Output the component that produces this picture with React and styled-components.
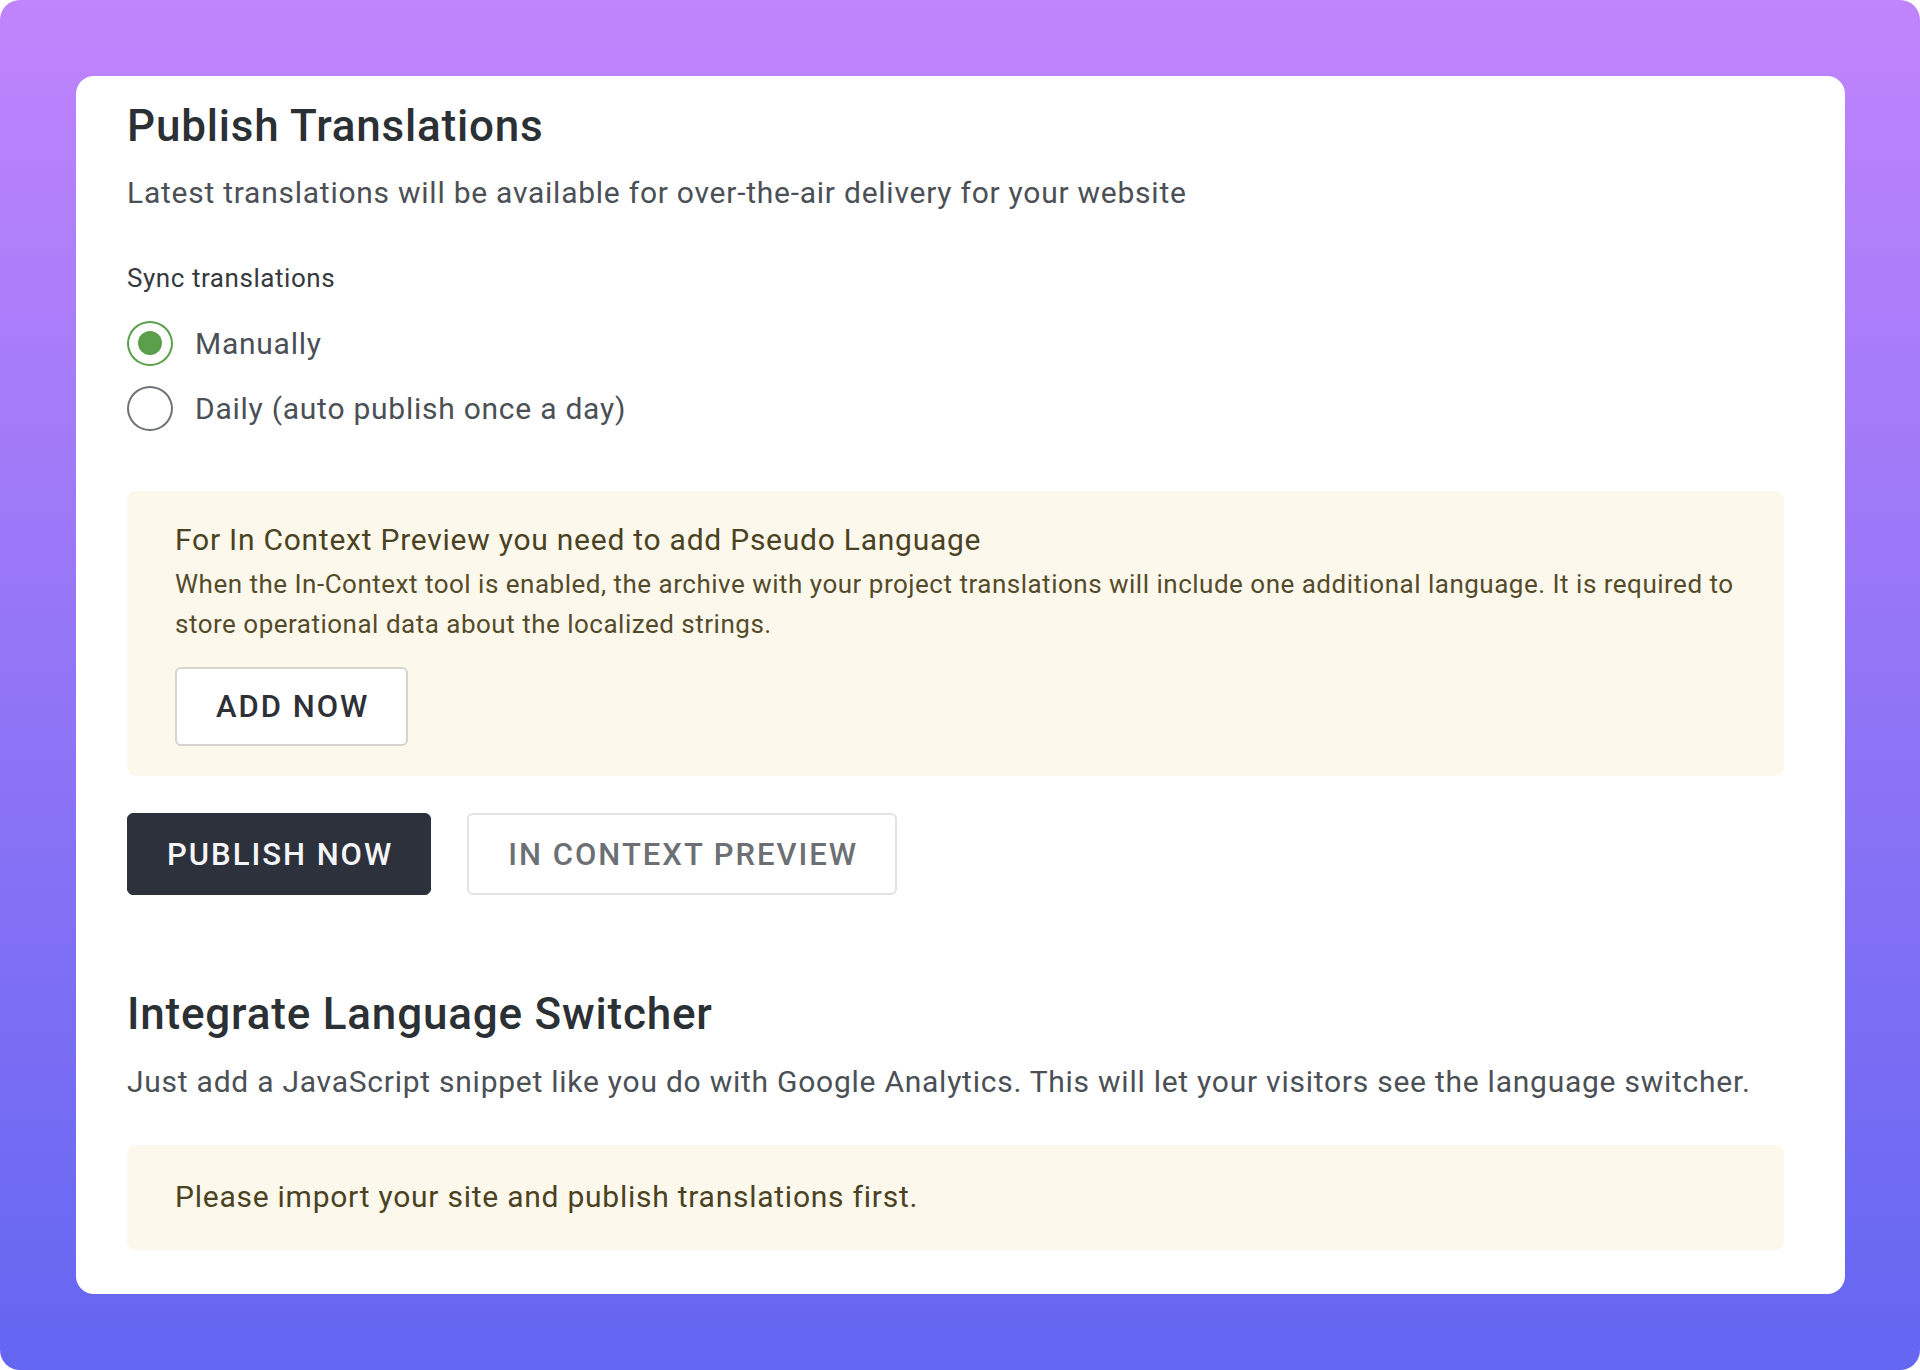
import React, { useState } from "react";
import styled, { createGlobalStyle } from "styled-components";

const Global = createGlobalStyle`
  html, body { margin: 0; padding: 0; background: #ffffff; }
  body { font-family: Roboto, "Noto Sans", "Liberation Sans", sans-serif; }
  * { box-sizing: border-box; }
`;

const Backdrop = styled.div`
  width: 1920px;
  height: 1370px;
  border-radius: 20px;
  background: linear-gradient(180deg, #c084fc 0%, #6366f1 100%);
  padding: 76px 75px 76px 76px;
`;

const Card = styled.div`
  background: #ffffff;
  border-radius: 18px;
  padding: 28px 61px 44px 51px;
  display: flex;
  flex-direction: column;
`;

const Title = styled.h1`
  margin: ${(p) => p.$top || 0}px 0 0;
  font-size: 44px;
  line-height: 44px;
  font-weight: 500;
  letter-spacing: 0.8px;
  color: #2b3035;
`;

const Lead = styled.p`
  margin: ${(p) => p.$top || 0}px 0 0;
  font-size: 30px;
  line-height: 36px;
  letter-spacing: 0.75px;
  color: #4b5056;
`;

const FieldLabel = styled.div`
  margin-top: 53px;
  font-size: 26px;
  line-height: 28px;
  letter-spacing: 0.55px;
  color: #35393e;
`;

const RadioGroup = styled.div`
  margin-top: 25px;
  display: flex;
  flex-direction: column;
  gap: 13px;
`;

const RadioRow = styled.label`
  display: flex;
  align-items: center;
  height: 52px;
  gap: 22px;
  cursor: pointer;
  font-size: 30px;
  letter-spacing: 0.75px;
  color: #4b5056;
`;

const RadioDot = styled.span`
  width: 46px;
  height: 45px;
  border-radius: 50%;
  border: 2.5px solid ${(p) => (p.$checked ? "#5b9f4c" : "#6f7276")};
  display: flex;
  align-items: center;
  justify-content: center;
  flex: none;
  &::after {
    content: "";
    width: 24px;
    height: 24px;
    border-radius: 50%;
    background: ${(p) => (p.$checked ? "#5b9f4c" : "transparent")};
  }
`;

const Notice = styled.div`
  margin-top: ${(p) => p.$top}px;
  background: #fdf8ec;
  border-radius: 9px;
  padding: ${(p) => p.$pad};
  color: #4d4524;
`;

const NoticeTitle = styled.div`
  font-size: 30px;
  line-height: 36px;
  letter-spacing: 0.75px;
  color: #4a4222;
`;

const NoticeBody = styled.p`
  margin: 6px 0 0;
  font-size: 26px;
  line-height: 40px;
  letter-spacing: 0.5px;
  color: #544b2a;
`;

const Button = styled.button`
  height: ${(p) => p.$h}px;
  padding: 0 37px 0 39px;
  border-radius: 6px;
  font-family: inherit;
  font-size: 31px;
  font-weight: 500;
  letter-spacing: 2px;
  text-transform: uppercase;
  cursor: pointer;
  ${(p) =>
    p.$variant === "primary"
      ? `background: #2d313c; color: #f4f5f7; border: 1px solid #2d313c;`
      : p.$variant === "outline"
      ? `background: #ffffff; color: #6c7075; border: 2px solid #e1e2e4;`
      : `background: #ffffff; color: #2d3137; border: 2px solid #d5d4cf;`}
`;

const AddButton = styled(Button)`
  margin-top: 23px;
`;

const ButtonRow = styled.div`
  margin-top: 37px;
  display: flex;
  gap: 36px;
`;

export default function App() {
  const [mode, setMode] = useState("manual");
  return (
    <>
      <Global />
      <Backdrop>
        <Card>
          <Title>Publish Translations</Title>
          <Lead $top={27}>
            Latest translations will be available for over-the-air delivery for your website
          </Lead>
          <FieldLabel>Sync translations</FieldLabel>
          <RadioGroup>
            <RadioRow onClick={() => setMode("manual")}>
              <RadioDot $checked={mode === "manual"} />
              Manually
            </RadioRow>
            <RadioRow onClick={() => setMode("daily")}>
              <RadioDot $checked={mode === "daily"} />
              Daily (auto publish once a day)
            </RadioRow>
          </RadioGroup>
          <Notice $top={57} $pad="31px 44px 30px 48px">
            <NoticeTitle>For In Context Preview you need to add Pseudo Language</NoticeTitle>
            <NoticeBody>
              When the In-Context tool is enabled, the archive with your project translations will
              include one additional language. It is required to store operational data about the
              localized strings.
            </NoticeBody>
            <AddButton $h={79}>Add now</AddButton>
          </Notice>
          <ButtonRow>
            <Button $variant="primary" $h={82}>Publish now</Button>
            <Button $variant="outline" $h={82}>In context preview</Button>
          </ButtonRow>
          <Title $top={97}>Integrate Language Switcher</Title>
          <Lead $top={28}>
            Just add a JavaScript snippet like you do with Google Analytics. This will let your
            visitors see the language switcher.
          </Lead>
          <Notice $top={45} $pad="34px 48px 35px 48px">
            <NoticeTitle>Please import your site and publish translations first.</NoticeTitle>
          </Notice>
        </Card>
      </Backdrop>
    </>
  );
}
